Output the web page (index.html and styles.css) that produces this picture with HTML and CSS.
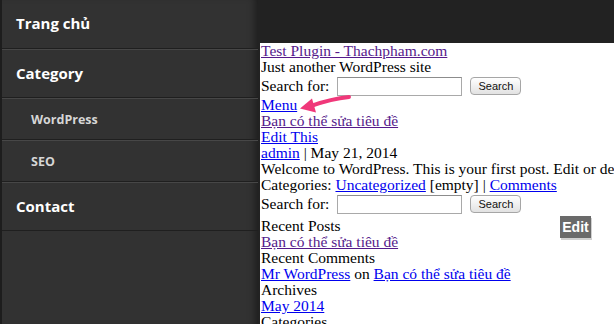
FILE: index.html
```html
<!DOCTYPE html>
<html lang="vi">
<head>
    <meta charset="UTF-8">
    <meta name="viewport" content="width=device-width, initial-scale=1.0">
    <title>Test Plugin - Thachpham.com</title>
    <link rel="stylesheet" href="styles.css">
</head>
<body>

<div class="page">
    <nav class="side-menu">
        <ul>
            <li class="item"><a href="#">Trang chủ</a></li>
            <li class="item"><a href="#">Category</a></li>
            <li class="item sub"><a href="#">WordPress</a></li>
            <li class="item sub"><a href="#">SEO</a></li>
            <li class="item"><a href="#">Contact</a></li>
        </ul>
    </nav>

    <div class="main">
        <div class="topbar"></div>
        <div class="content">
            <div><a class="visited" href="#">Test Plugin - Thachpham.com</a></div>
            <div>Just another WordPress site</div>
            <form class="search">
                <label for="s1">Search for:</label>
                <input type="text" id="s1">
                <button type="button">Search</button>
            </form>
            <div><a href="#">Menu</a></div>
            <div><a class="visited" href="#">Bạn có thể sửa tiêu đề</a></div>
            <div><a href="#">Edit This</a></div>
            <div><a href="#">admin</a> | May 21, 2014</div>
            <div class="nowrap">Welcome to WordPress. This is your first post. Edit or delete it, then start blogging!</div>
            <div>Categories: <a href="#">Uncategorized</a> [empty] | <a href="#">Comments</a></div>
            <form class="search widget">
                <label for="s2">Search for:</label>
                <input type="text" id="s2">
                <button type="button">Search</button>
            </form>
            <div>Recent Posts</div>
            <div><a class="visited" href="#">Bạn có thể sửa tiêu đề</a></div>
            <div>Recent Comments</div>
            <div><a href="#">Mr WordPress</a> on <a href="#">Bạn có thể sửa tiêu đề</a></div>
            <div>Archives</div>
            <div><a href="#">May 2014</a></div>
            <div>Categories</div>
        </div>
    </div>
</div>

<!-- mũi tên chỉ vào link Menu -->
<svg class="arrow" width="56" height="24" viewBox="0 0 56 24">
    <path d="M51 6 Q33 8 14 14.6" fill="none" stroke="#f0387a" stroke-width="4" stroke-linecap="round"/>
    <polygon points="2,17.5 18,21.5 14,7.5" fill="#f0387a"/>
</svg>

<a class="edit-badge" href="#">Edit</a>

</body>
</html>
```

FILE: styles.css
```css
html, body {
    margin: 0;
    padding: 0;
    height: 100%;
    overflow: hidden;
}

body {
    background-color: #222;
    font-family: "Liberation Serif", "Times New Roman", serif;
}

.page {
    display: flex;
    height: 100%;
}

/* menu bên trái */
.side-menu {
    width: 256px;
    flex-shrink: 0;
    background-color: #323232;
    border-left: 2px solid #1d1d1d;
    box-shadow: inset -8px 0 8px -6px rgba(0, 0, 0, 0.5);
}

.side-menu ul {
    list-style: none;
    margin: 0;
    padding: 0;
}

.side-menu .item {
    border-top: 1px solid #474747;
    border-bottom: 1px solid #1f1f1f;
}

.side-menu .item:first-child {
    border-top: none;
}

.side-menu .item a {
    display: block;
    padding: 0 14px;
    height: 47px;
    line-height: 47px;
    color: #fff;
    font-family: "Open Sans", Arial, sans-serif;
    font-weight: bold;
    font-size: 15px;
    text-decoration: none;
}

.side-menu .item:first-child a {
    height: 48px;
}

.side-menu .item.sub a {
    height: 40px;
    line-height: 41px;
    padding-left: 29px;
    font-size: 12.5px;
    color: #d6d6d6;
}

.main {
    flex: 1;
    display: flex;
    flex-direction: column;
    min-width: 0;
}

.topbar {
    height: 43px;
    flex-shrink: 0;
    background-color: #222;
}

.content {
    flex: 1;
    background-color: #fff;
    margin-left: 2px;
    padding-left: 1px;
    font-size: 15.5px;
    line-height: 16px;
    color: #000;
}

.content a {
    color: #0000ee;
}

.content a.visited {
    color: #551a8b;
}

.nowrap {
    white-space: nowrap;
}

.search {
    display: flex;
    align-items: center;
    height: 22px;
    margin: 0;
}

.search.widget {
    margin-bottom: 3px;
}

.search input {
    width: 121px;
    height: 15px;
    margin: 0 0 0 8px;
    padding: 1px;
    border: 1px solid #a9a9a9;
    border-top-color: #8c8c8c;
}

.search button {
    margin-left: 8px;
    width: 51px;
    height: 18px;
    padding: 0;
    border: 1px solid #a6a6a6;
    border-radius: 4px;
    background: linear-gradient(#ffffff, #e2e2e2);
    font-family: "Liberation Sans", Arial, sans-serif;
    font-size: 11px;
    color: #111;
}

.arrow {
    position: absolute;
    left: 298px;
    top: 91px;
}

.edit-badge {
    position: absolute;
    left: 560px;
    top: 216px;
    width: 31px;
    height: 22px;
    line-height: 22px;
    text-align: center;
    background-color: #6a6a6a;
    color: #fff;
    font-family: "Liberation Sans", Arial, sans-serif;
    font-weight: bold;
    font-size: 14px;
    text-decoration: none;
    box-shadow: 1px 2px 0 #d0d0d0;
}
```
